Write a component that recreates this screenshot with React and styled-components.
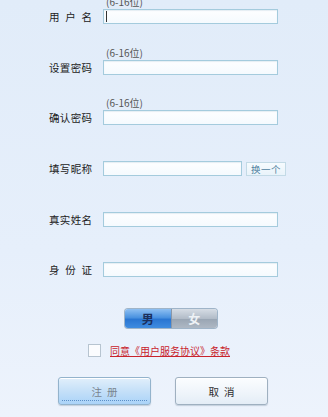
import React from "react";
import styled, { createGlobalStyle } from "styled-components";

const Global = createGlobalStyle`
  html, body { margin: 0; padding: 0; }
  body {
    background: linear-gradient(180deg, #e1ecf9 0%, #e6effb 60%, #edf3fc 100%);
    font-family: "Noto Sans CJK SC", "Noto Sans", sans-serif;
    overflow: hidden;
  }
`;

const Page = styled.div`
  width: 328px;
  height: 417px;
  overflow: hidden;
  display: flex;
  flex-direction: column;
  & > * { flex-shrink: 0; }
`;

const Form = styled.div`
  display: flex;
  flex-direction: column;
  gap: 23.7px;
  margin-top: -3px;
`;

const Row = styled.div`
  display: flex;
  align-items: flex-end;
  padding-left: 49px;
`;

const Label = styled.div`
  width: 43px;
  height: 15px;
  line-height: 15px;
  font-size: 10.5px;
  color: #222;
  text-align: justify;
  text-align-last: justify;
  margin-right: 11px;
  white-space: nowrap;
`;

const Field = styled.div`
  display: flex;
  flex-direction: column;
`;

const Hint = styled.div`
  height: 10px;
  line-height: 10px;
  padding-bottom: 2px;
  font-size: 10px;
  color: #555;
  padding-left: 3px;
  white-space: nowrap;
  visibility: ${(p) => (p.$show ? "visible" : "hidden")};
`;

const InputLine = styled.div`
  display: flex;
  align-items: center;
  gap: 4px;
  height: 15px;
`;

const InputWrap = styled.div`
  position: relative;
  height: 15px;
`;

const TextInput = styled.input`
  display: block;
  box-sizing: border-box;
  width: ${(p) => p.$w}px;
  height: 15px;
  margin: 0;
  padding: 0 3px;
  border: 1px solid #a4cbdd;
  background: linear-gradient(180deg, #fdfeff 0%, #f5fafe 100%);
  box-shadow: inset 0 1px 1px rgba(120, 160, 190, 0.18);
  outline: none;
  font-size: 10px;
  font-family: inherit;
`;

const Caret = styled.span`
  position: absolute;
  left: 3px;
  top: 2px;
  width: 1px;
  height: 11px;
  background: #333;
`;

const SmallButton = styled.button`
  box-sizing: border-box;
  width: 40px;
  height: 14px;
  margin: 0;
  padding: 0;
  border: 1px solid #c3dae6;
  background: linear-gradient(180deg, #f6fbfe 0%, #e9f3fa 100%);
  color: #4f7f9e;
  font-family: inherit;
  font-size: 9.5px;
  line-height: 12px;
  letter-spacing: 0.5px;
`;

const Toggle = styled.div`
  display: flex;
  margin: 32px 0 0 125px;
  width: 92px;
  height: 19px;
  border-radius: 3px;
  overflow: hidden;
  box-shadow: 0 0 0 1px #9fb4c8;
`;

const ToggleHalf = styled.div`
  flex: 1;
  display: flex;
  align-items: center;
  justify-content: center;
  font-size: 12px;
  font-weight: 700;
  color: ${(p) => (p.$active ? "#1b2f5c" : "#eef2f6")};
  background: ${(p) =>
    p.$active
      ? "linear-gradient(180deg, #8fc0f2 0%, #4a92e0 45%, #2a76d2 55%, #3f8ce0 100%)"
      : "linear-gradient(180deg, #d6dde5 0%, #b2bcc8 50%, #9aa6b4 55%, #aeb8c4 100%)"};
  border-left: ${(p) => (p.$active ? "none" : "1px solid #8a97a8")};
`;

const AgreeRow = styled.div`
  display: flex;
  align-items: center;
  gap: 9px;
  margin: 16px 0 0 88px;
`;

const Box = styled.div`
  box-sizing: border-box;
  width: 13px;
  height: 13px;
  border: 1px solid #b7c4d0;
  background: #fbfcfe;
`;

const Link = styled.a`
  font-size: 10px;
  color: #c8232c;
  text-decoration: underline;
  line-height: 13px;
  cursor: pointer;
`;

const Buttons = styled.div`
  display: flex;
  gap: 24px;
  margin: 20px 0 0 58px;
`;

const Btn = styled.button`
  position: relative;
  box-sizing: border-box;
  width: 93px;
  height: 28px;
  margin: 0;
  padding: 0;
  border-radius: 3px;
  border: 1px solid ${(p) => (p.$primary ? "#93b3cc" : "#9fb0c0")};
  background: ${(p) =>
    p.$primary
      ? "linear-gradient(180deg, #e1effb 0%, #c5e0f8 50%, #aad3f8 100%)"
      : "linear-gradient(180deg, #fbfdff 0%, #eef4fa 60%, #e4edf6 100%)"};
  box-shadow: 0 1px 1px rgba(120, 140, 160, 0.35), inset 0 1px 0 #ffffff;
  color: ${(p) => (p.$primary ? "#7a8590" : "#2e2e2e")};
  font-family: inherit;
  font-size: 10.5px;
  letter-spacing: 5px;
  text-indent: 5px;
  &::after {
    content: "";
    display: ${(p) => (p.$primary ? "block" : "none")};
    position: absolute;
    left: 3px;
    right: 3px;
    bottom: 3px;
    border-bottom: 1px dotted #5a8fc8;
  }
`;

const fields = [
  { label: "用户名", hint: true, caret: true },
  { label: "设置密码", hint: true },
  { label: "确认密码", hint: true },
  { label: "填写昵称", nick: true },
  { label: "真实姓名" },
  { label: "身份证" },
];

export default function App() {
  return (
    <Page>
      <Global />
      <Form>
        {fields.map((f) => (
          <Row key={f.label}>
            <Label>{f.label}</Label>
            <Field>
              <Hint $show={f.hint}>(6-16位)</Hint>
              <InputLine>
                <InputWrap>
                  <TextInput
                    $w={f.nick ? 139 : 175}
                    type={f.label.includes("密码") ? "password" : "text"}
                    readOnly
                  />
                  {f.caret && <Caret />}
                </InputWrap>
                {f.nick && <SmallButton>换一个</SmallButton>}
              </InputLine>
            </Field>
          </Row>
        ))}
      </Form>
      <Toggle>
        <ToggleHalf $active>男</ToggleHalf>
        <ToggleHalf>女</ToggleHalf>
      </Toggle>
      <AgreeRow>
        <Box />
        <Link>同意《用户服务协议》条款</Link>
      </AgreeRow>
      <Buttons>
        <Btn $primary>注册</Btn>
        <Btn>取消</Btn>
      </Buttons>
    </Page>
  );
}
